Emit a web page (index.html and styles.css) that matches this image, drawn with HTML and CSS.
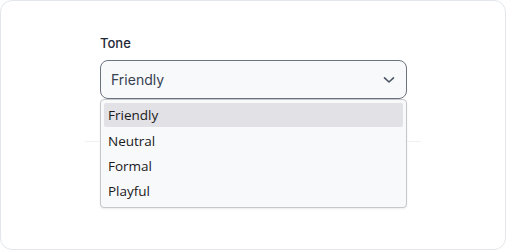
FILE: index.html
```html
<!DOCTYPE html>
<html lang="en">
<head>
	<meta charset="UTF-8">
	<title>Tone</title>
	<link rel="stylesheet" href="styles.css">
</head>
<body>
<div class="card">
	<div class="form">
		<div class="field">
			<label class="label">Tone</label>
			<div class="select">
				<span class="value">Friendly</span>
				<svg class="chevron" width="12" height="8" viewBox="0 0 12 8"><path d="M1.5 1.8 L6 6 L10.5 1.8" fill="none" stroke="#4b5563" stroke-width="1.6" stroke-linecap="round" stroke-linejoin="round"/></svg>
				<ul class="menu">
					<li class="on">Friendly</li>
					<li>Neutral</li>
					<li>Formal</li>
					<li>Playful</li>
				</ul>
			</div>
		</div>
		<div class="divider"></div>
	</div>
</div>
</body>
</html>
```

FILE: styles.css
```css
body{
	margin:0;
	padding:0;
	background:#fff;
	font-family: Inter, "Liberation Sans", sans-serif;
}
.card{
	box-sizing: border-box;
	width: 506px;
	height: 250px;
	border: 1px solid #e3e7eb;
	border-radius: 12px;
	padding: 0 84px;
}
.form{
	padding-top: 32px;
}
.field{
	padding: 0 14px 0 15px;
}
.label{
	display: block;
	font-size: 13px;
	font-weight: 500;
	color: #1f2937;
	line-height: 20px;
	margin-bottom: 7px;
}
.select{
	position: relative;
	height: 39px;
	box-sizing: border-box;
	border: 1px solid #6b7280;
	border-radius: 8px;
	background: #f8f9fb;
	display: flex;
	align-items: center;
	justify-content: space-between;
	padding: 0 11px 0 10px;
}
.select .value{
	font-size: 14px;
	color: #374151;
}
.chevron{
	display: block;
}
/* 下拉菜单 */
.menu{
	position: absolute;
	left: -1px;
	right: -1px;
	top: 38px;
	margin: 0;
	padding: 3px;
	list-style: none;
	background: #f8f9fa;
	border: 1px solid #c6c7ca;
	border-radius: 4px;
	box-shadow: 0 1px 2px rgba(0,0,0,0.08);
	font-family: "Open Sans", "Noto Sans", sans-serif;
	z-index: 2;
}
.menu li{
	height: 25px;
	line-height: 25px;
	padding: 0 4px;
	font-size: 13.5px;
	color: #1a1a1a;
	border-radius: 2px;
}
.menu li.on{
	background: #e1e1e6;
	height: 24px;
	line-height: 24px;
	margin-bottom: 2px;
}
.divider{
	margin-top: 42px;
	border-top: 1px solid #f0f1f3;
}
```
